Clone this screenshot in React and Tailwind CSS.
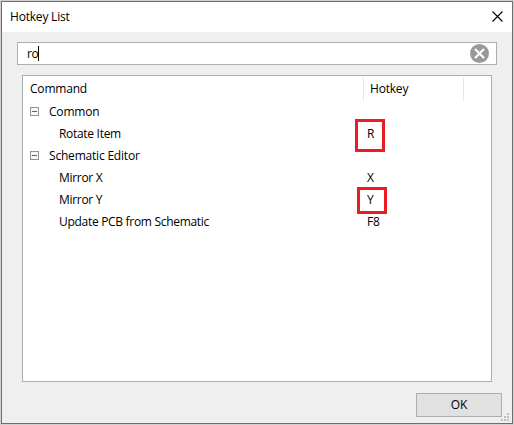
const groups = [
  { name: 'Common', items: [{ name: 'Rotate Item', key: 'R', mark: 'r' }] },
  {
    name: 'Schematic Editor',
    items: [
      { name: 'Mirror X', key: 'X' },
      { name: 'Mirror Y', key: 'Y', mark: 'y' },
      { name: 'Update PCB from Schematic', key: 'F8' },
    ],
  },
];

const marks = {
  r: 'absolute -left-[12px] -top-[4px] w-[30px] h-[33px] border-3 border-[#ed1c24]',
  y: 'absolute -left-[10px] -top-[2px] w-[30px] h-[27px] border-3 border-[#ed1c24]',
};

function Expander() {
  return (
    <svg className="mb-px ml-[7px] mr-[10px] shrink-0" width="9" height="9" shapeRendering="crispEdges">
      <rect x="0.5" y="0.5" width="8" height="8" fill="#f7f7f7" stroke="#919191" />
      <rect x="2" y="4" width="5" height="1" fill="#4b63a7" />
    </svg>
  );
}

function Group({ group }) {
  return (
    <>
      <div className="flex h-[22px] items-center tracking-[-0.2px]">
        <Expander />
        <span>{group.name}</span>
      </div>
      {group.items.map((item) => (
        <div key={item.name} className="flex h-[22px] items-center tracking-[-0.3px]">
          <span className="w-[308px] pl-[36px]">{item.name}</span>
          <div className="relative h-[22px] pl-[36px]">
            <span className="block leading-[22px]">{item.key}</span>
            {item.mark && (
              <div className="absolute left-[36px] top-0">
                <div className={marks[item.mark]} />
              </div>
            )}
          </div>
        </div>
      ))}
    </>
  );
}

export default function App() {
  return (
    <div className="h-[425px] w-[514px] bg-[#d0d0d0] p-px font-['Open_Sans',sans-serif] text-[12px] leading-[22px] tracking-[-0.2px] text-black">
      <div className="flex h-[423px] w-[512px] flex-col border border-[#6e6e6e] bg-[#efefef]">
        <div className="flex h-[30px] shrink-0 items-center justify-between bg-white pl-[8px] pr-[9px]">
          <span>Hotkey List</span>
          <svg className="mb-px" width="11" height="11" viewBox="0 0 11 11" stroke="#000" strokeWidth="1.1">
            <path d="M0.5 0.5 10.5 10.5M10.5 0.5 0.5 10.5" />
          </svg>
        </div>

        <div className="ml-[15px] mt-[10px] flex h-[23px] w-[480px] shrink-0 items-center border border-[#abadb3] bg-white pl-[9px] pr-[7px]">
          <span className="w-[11px] tracking-[-0.5px]">ro</span>
          <div className="mb-px h-[15px] w-px bg-black" />
          <svg className="ml-auto" width="19" height="19" viewBox="0 0 19 19">
            <circle cx="9.5" cy="9.5" r="9.5" fill="#999" />
            <path d="M5 5 14 14M14 5 5 14" stroke="#fff" strokeWidth="2.2" />
          </svg>
        </div>

        <div className="ml-[20px] mt-[10px] h-[307px] w-[470px] shrink-0 border border-[#abadb3] bg-white">
          <div className="flex h-[25px] items-center">
            <span className="w-[340px] pl-[7px]">Command</span>
            <div className="h-[24px] w-px bg-[#e5e5e5]" />
            <span className="w-[99px] pl-[6px]">Hotkey</span>
            <div className="h-[24px] w-px bg-[#e5e5e5]" />
          </div>
          {groups.map((g) => (
            <Group key={g.name} group={g} />
          ))}
        </div>

        <div className="flex pl-[414px] pt-[11px]">
          <button className="h-[24px] w-[86px] shrink-0 border border-[#adadad] bg-[#e1e1e1]">OK</button>
          <svg className="-ml-px mt-[20px] shrink-0" width="8" height="8" fill="#bfbfbf" shapeRendering="crispEdges">
            <path d="M0 6h2v2H0zM3 6h2v2H3zM6 6h2v2H6zM3 3h2v2H3zM6 3h2v2H6zM6 0h2v2H6z" />
          </svg>
        </div>
      </div>
    </div>
  );
}
